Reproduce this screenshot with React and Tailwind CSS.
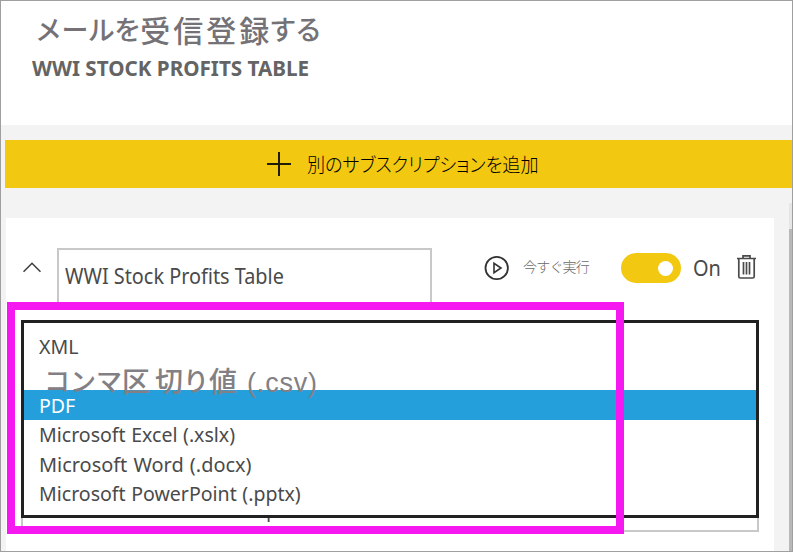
const latin = "font-['Noto_Sans','Open_Sans',sans-serif]";
const cjk = "font-['Noto_Sans_CJK_JP',sans-serif]";

function Option({ children, selected, wide }) {
  return (
    <li
      className={
        "flex h-[29.5px] items-center pl-[15px] pt-px " +
        (selected ? 'bg-[#259fdb] text-white' : 'text-[#4a4a4a]')
      }
    >
      <span
        className={
          'origin-left whitespace-nowrap ' +
          (wide ? 'scale-x-[0.958] [word-spacing:1px]' : 'scale-x-[0.94] [word-spacing:0.5px]')
        }
      >
        {children}
      </span>
    </li>
  );
}

function Header() {
  return (
    <header className="h-[124px] bg-white pl-[31px] pt-[7px]">
      <h1 className={`${cjk} flex h-[42px] items-center whitespace-nowrap text-[30px] font-medium text-[#747276]`}>
        <span className="ml-[3px] text-[27px] tracking-[-0.6px]">メール</span>
        <span className="text-[27px]">を</span>
        <span className="ml-[-1px] tracking-[3px]">受信登録</span>
        <span className="ml-[-3px] text-[27px] tracking-[-1.2px]">する</span>
      </h1>
      <h2 className={`${latin} mt-[6px] flex h-[26px] items-center whitespace-nowrap text-[21px] font-bold text-[#646464]`}>
        <span className="origin-left scale-x-[0.983]">WWI STOCK PROFITS TABLE</span>
      </h2>
    </header>
  );
}

function AddButton() {
  return (
    <button className="ml-[4px] flex h-[48px] w-[787px] items-center bg-[#f2c811] pl-[262px] text-black">
      <svg width="24" height="24" viewBox="0 0 24 24" stroke="#1f1c08" strokeWidth="2">
        <path d="M0 12H24M12 0V24" />
      </svg>
      <span className={`${cjk} ml-[16px] origin-left scale-x-[0.952] whitespace-nowrap text-[19px] font-light [font-feature-settings:'palt']`}>
        別のサブスクリプションを追加
      </span>
    </button>
  );
}

function TitleRow() {
  return (
    <div className={`${latin} flex h-[102px] pt-[30px] text-[21px] text-[#4a4a4a]`}>
      <svg className="ml-[17px] mt-[14px]" width="18" height="11" viewBox="0 0 18 11" fill="none" stroke="#3c3c3c" strokeWidth="1.5">
        <path d="M0.5 9.8L9 1.2L17.5 9.8" />
      </svg>
      <div className="ml-[16px] flex h-[60px] w-[375px] items-start border-2 border-[#c8c8c8] pl-[6px] pt-[11px]">
        <span className="origin-left scale-x-[0.945] whitespace-nowrap">WWI Stock Profits Table</span>
      </div>
      <div className="ml-[52px] flex h-[40px] items-center">
        <svg width="26" height="26" viewBox="0 0 26 26" fill="none" stroke="#333" strokeWidth="1.8">
          <circle cx="12.7" cy="13" r="11.2" />
          <path d="M10 8.3V17.7L17 13Z" strokeWidth="1.6" />
        </svg>
        <span className={`${cjk} mb-[4px] ml-[13px] w-[70px] whitespace-nowrap text-[14px] font-light tracking-[-0.8px] text-[#6a6a6a]`}>
          今すぐ実行
        </span>
        <span className="ml-[28px] flex h-[30px] w-[60px] items-center justify-end rounded-full bg-[#f2c811] pr-[8px]">
          <span className="size-[15px] rounded-full bg-white" />
        </span>
        <span className="ml-[12px] mt-[2px] w-[30px] origin-left scale-x-[0.95]">On</span>
        <svg className="ml-[13px] mb-[2px]" width="21" height="26" viewBox="0 0 21 26" fill="none" stroke="#4a4a4a" strokeWidth="1.7">
          <path d="M1 4.5H20M7 4.5V1.8H14V4.5M2.8 4.5V22.5Q2.8 24 4.3 24H16.7Q18.2 24 18.2 22.5V4.5M7.5 8V20.5M10.5 8V20.5M13.5 8V20.5" />
        </svg>
      </div>
    </div>
  );
}

function FormatDropdown() {
  return (
    <div className="relative ml-[15px] h-[212px] w-[738px] border-2 border-[#c8c8c8]">
      <span className={`${latin} absolute left-[243px] top-[173px] text-[20px] text-[#4a4a4a]`}>p</span>
      <ul className={`${latin} absolute -left-[2px] -top-[2px] h-[198px] w-[738px] border-[3px] border-[#212121] bg-white pt-[8px] text-[20.8px]`}>
        <Option>XML</Option>
        <li className="relative z-10 h-[29.5px]">
          <span className={`${cjk} absolute left-[20px] top-[-1px] flex h-[40px] items-center whitespace-nowrap text-[28px] font-medium text-[#828084]`}>
            <span className="text-[26px]">コンマ</span>
            <span>区</span>
            <span className="ml-[5px]">切</span>
            <span className="text-[26px]">り</span>
            <span>値</span>
            <span className="ml-[10px] mt-[8px] font-['Liberation_Sans',sans-serif] text-[27px] font-normal tracking-[0.8px]">(.csv)</span>
          </span>
        </li>
        <Option selected>PDF</Option>
        <Option>Microsoft Excel (.xslx)</Option>
        <Option wide>Microsoft Word (.docx)</Option>
        <Option>Microsoft PowerPoint (.pptx)</Option>
      </ul>
    </div>
  );
}

export default function App() {
  return (
    <div className="relative h-[552px] w-[793px] overflow-hidden border border-[#9f9f9f] bg-[#f3f3f3]">
      <Header />
      <div className="pt-[15px]">
        <AddButton />
      </div>
      <main className="ml-[5px] mt-[30px] h-[333px] w-[768px] bg-white">
        <TitleRow />
        <FormatDropdown />
      </main>
      <div className="absolute right-0 top-[202px] h-[349px] w-[3px] bg-[#e6e6e6] pt-[26px]">
        <div className="h-full bg-[#b8b8b8]" />
      </div>
      <div className="pointer-events-none absolute left-[6px] top-[301px] h-[232px] w-[617px] border-8 border-[#f518f0]" />
    </div>
  );
}
